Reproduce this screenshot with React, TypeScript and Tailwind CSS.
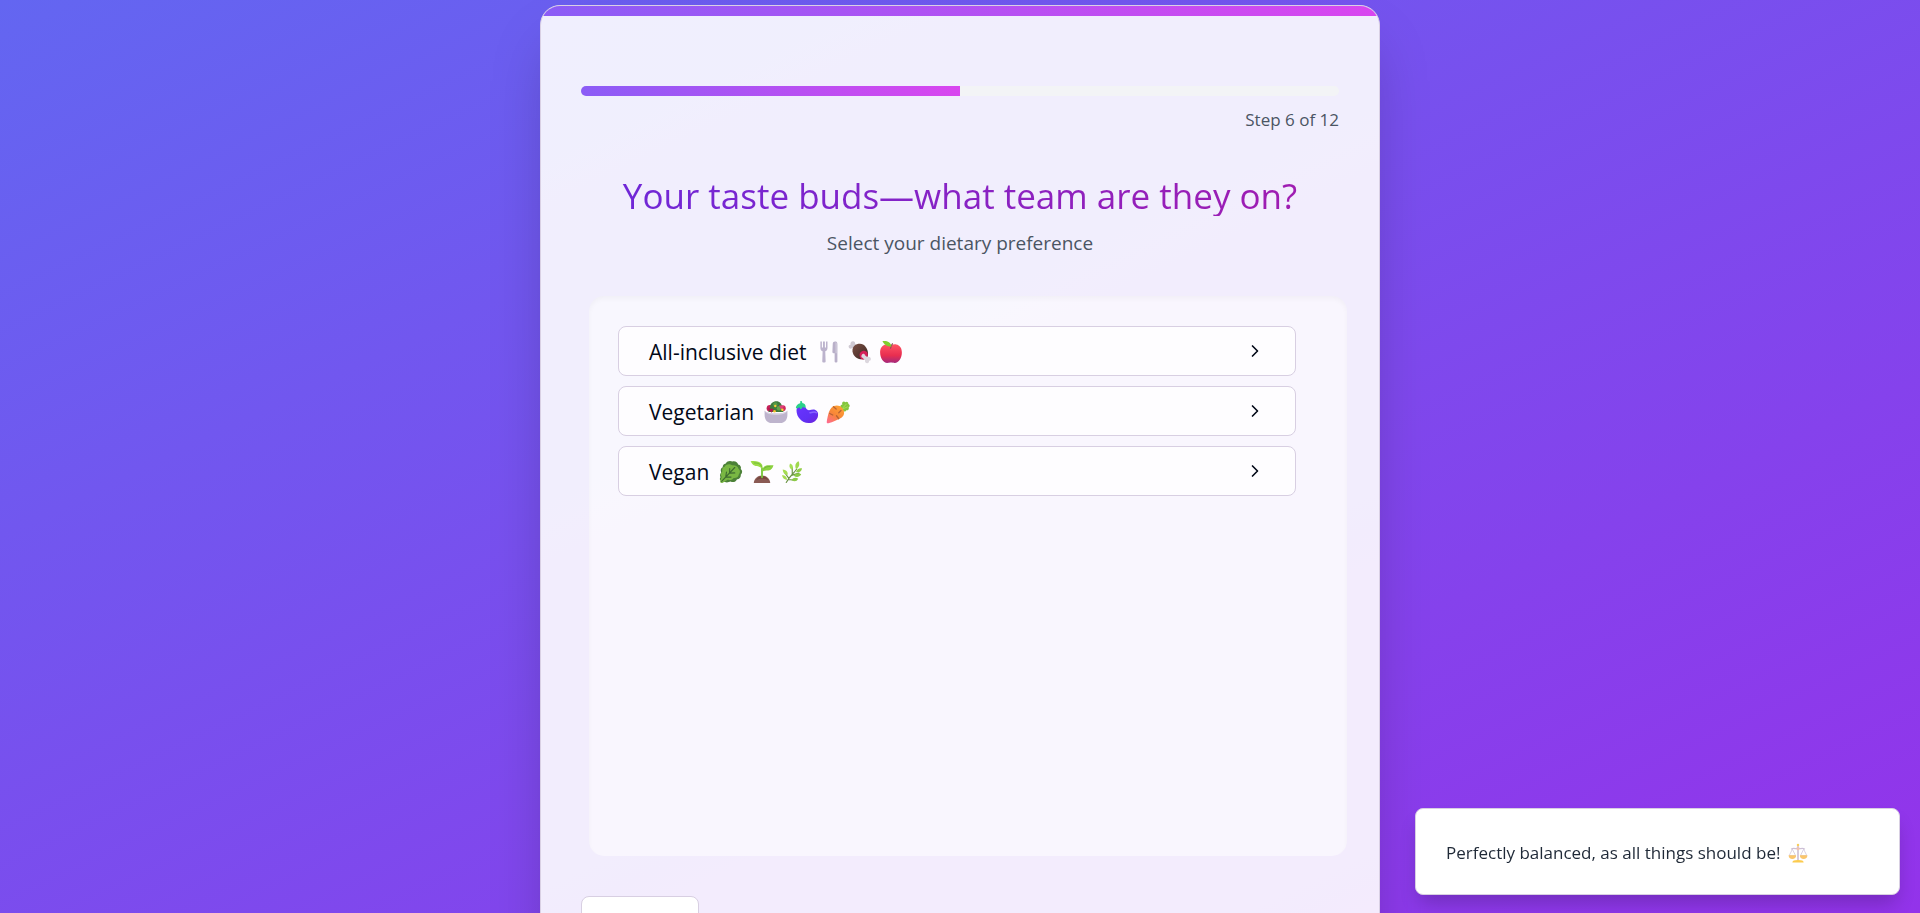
import { useId, type ReactNode } from "react";
import { ChevronRight } from "lucide-react";

function Emoji({ label, small, children }: { label: string; small?: boolean; children: ReactNode }) {
  return (
    <svg viewBox="0 0 32 32" role="img" aria-label={label} className={small ? "size-5 shrink-0" : "size-6 shrink-0"}>
      {children}
    </svg>
  );
}

function ForkAndKnife() {
  return (
    <Emoji label="Fork and knife">
      <path d="M4.500 2v8.500c0 2.500 1.500 4 3 4.500L7 28.500a1.500 1.500 0 0 0 1.500 1.500h1.500a1.500 1.500 0 0 0 1.500-1.500L11 15c1.500-.5 3-2 3-4.500V2h-2v8h-1.500V2H8v8H6.500V2Z" fill="#bcb3cd" />
      <path d="M21 5c0-2 1.500-3 3-3h1c1.500 0 2.200 1.500 2.200 3.500V28.500a1.500 1.500 0 0 1-1.500 1.500H25a1.500 1.500 0 0 1-1.500-1.500V17.500H22c-1 0-1.500-.6-1.500-1.600Z" fill="#b9b0c9" />
      <path d="M24.500 3h.6c1 0 1.500 1 1.500 2.500v12h-2Z" fill="#cdc6d8" />
    </Emoji>
  );
}

function MeatOnBone() {
  const id = useId();
  return (
    <Emoji label="Meat on bone">
      <defs>
        <linearGradient id={id} x1="0" y1="0" x2="1" y2="1">
          <stop offset="0" stopColor="#795044" />
          <stop offset="1" stopColor="#3f2522" />
        </linearGradient>
      </defs>
      <path d="m9.500 11-4-.2C3.500 12.500.8 11 .8 8.800c0-1.700 1.200-2.600 2.500-2.600C3 3.500 4.200 1.500 6.500 1.500c2.500 0 3.500 2.200 3 3.900l3 2.600Z" fill="#cfc9d2" />
      <path d="M6 15C5.500 8.500 10 5 16 5c6 .3 9.500 5.500 10.500 11 1 6-1.500 9.500-7.500 9.800C12 26 6.500 21 6 15Z" fill={`url(#${id})`} />
      <path d="M15.500 20.500c-.5-4 3.500-6.500 7.200-6 2.500.4 3.900 2.500 3.600 5.500-.4 4-3 6.300-6.500 6-2.500-.2-4-2.500-4.300-5.500Z" fill="#d61f58" />
      <path d="M18.500 19.500c1.500-2 3.800-1 4.500 1l2.500 2.200c3-1.200 5.300.6 5 2.800-.1 1.500-1.200 2.300-2.400 2.300.2 1.800-.7 3.200-2.500 3.200-2.400 0-3.300-2-2.900-4l-3.400-3.200c-1.700-.8-2-2.800-.8-4.300Z" fill="#dcd7de" />
    </Emoji>
  );
}

function Apple() {
  const id = useId();
  return (
    <Emoji label="Red apple">
      <defs>
        <linearGradient id={id} x1="0" y1="0" x2="0" y2="1">
          <stop offset="0" stopColor="#ff5364" />
          <stop offset="0.6" stopColor="#e82e50" />
          <stop offset="1" stopColor="#a5297c" />
        </linearGradient>
      </defs>
      <path d="M16 7.500c2-1.500 4.500-2 7-1.500 4.800.8 7.700 5 7.500 11-.2 7-4 13.500-9.500 13.500-2 0-3-.4-5-.4s-3 .4-5 .4c-5.500 0-9.300-6.500-9.500-13.500C1.300 11 4.200 6.800 9 6c2.500-.5 5 0 7 1.500Z" fill={`url(#${id})`} />
      <path d="M15.500 11c.3-2.500 1-4.500 2.500-6" stroke="#87505a" strokeWidth="1.500" strokeLinecap="round" fill="none" />
      <path d="M4.500 1.500C10.500.6 15.500 2.800 16.700 8.500 10.500 8.800 7.500 6.500 4.500 1.500Z" fill="#7fd02e" />
    </Emoji>
  );
}

function Salad() {
  return (
    <Emoji label="Green salad">
      <circle cx="8" cy="11" r="4.500" fill="#c41f58" />
      <circle cx="25" cy="11" r="4" fill="#d12a60" />
      <path d="M8 10c0-5 4-8.300 8.500-8.300C21 1.700 24 5 24 10l2 6H6Z" fill="#3f7b3d" />
      <circle cx="15" cy="6" r="3" fill="#559b48" />
      <circle cx="20" cy="11" r="3" fill="#64a349" />
      <path d="m20 7 7 1-4 5Z" fill="#e1407a" />
      <path d="m5 11 8 1-3 5Z" fill="#b5134d" />
      <circle cx="15" cy="8" r="1.600" fill="#f7c934" />
      <circle cx="14" cy="15" r="1.800" fill="#f7bd2e" />
      <circle cx="24.500" cy="13" r="1.600" fill="#ffd33c" />
      <path d="M.8 14c2 5.500 28.400 5.500 30.400 0V20c0 6.500-4 10.800-9.500 10.800H10.300C4.800 30.800.8 26.500.8 20Z" fill="#beb4cd" />
      <path d="M.8 14c2 5.500 28.400 5.500 30.400 0 0 7.500-30.400 7.500-30.400 0Z" fill="#d9d3e2" />
    </Emoji>
  );
}

function Eggplant() {
  const id = useId();
  return (
    <Emoji label="Eggplant">
      <defs>
        <linearGradient id={id} x1="0" y1="0" x2="1" y2="1">
          <stop offset="0" stopColor="#6a34ff" />
          <stop offset="0.6" stopColor="#6030f5" />
          <stop offset="1" stopColor="#7022d9" />
        </linearGradient>
      </defs>
      <path d="M4 9c2-3 7-3 9.500 0 1.500 2 2 4.500 5 4.500 3-.3 5.500-1.500 8-.6 3.500 1.200 4.700 4.500 4.200 8C29.800 27 25 30.800 18 30.800 9 30.500 2 22.500 2 14c0-2 .8-3.700 2-5Z" fill={`url(#${id})`} />
      <path d="M20 17c3-.5 6-2 8.500 0" stroke="#8964ff" strokeWidth="2" strokeLinecap="round" fill="none" />
      <path d="M7 1.500c1-.7 2.500 0 2.500 1.200L9.700 4c3 .5 4.700 2.500 4.500 5.200-.1 1.300-1.700 1.700-2.500.7L10.500 9l-1.700 2.500c-.6.9-1.700.8-2.100-.1L6 9.500l-3 1.700c-1 .5-2-.2-1.800-1.400C1.700 7 4 4.700 7 4.200Z" fill="#2bd18a" />
    </Emoji>
  );
}

function Carrot() {
  const id = useId();
  return (
    <Emoji label="Carrot">
      <defs>
        <linearGradient id={id} x1="0.8" y1="0" x2="0.1" y2="1">
          <stop offset="0" stopColor="#ffa334" />
          <stop offset="0.5" stopColor="#f88638" />
          <stop offset="1" stopColor="#ff6b91" />
        </linearGradient>
      </defs>
      <path d="M20 11c-2-3 .2-5 1.800-4.600C20.500 3 23.500.8 25.800 3c1.800-1.700 4.300-.2 4 2.200C32 6 32.200 9 30.200 10c1 2.500-1.200 4.500-3.200 3.500-.5 2-3.300 2.300-4.500.5Z" fill="#84c63e" />
      <path d="m21 12 6.500-7M22 12l7-3" stroke="#a6df52" strokeWidth="1.300" />
      <path d="M7 10.500c4.500-4.500 11-4 14.500 0 4 4.500 3.500 10-1 13C16 26.500 9 29 3.200 31 1.800 31.500.8 30.500 1 29c1-6 2.500-15 6-18.500Z" fill={`url(#${id})`} />
      <path d="m10 9 3.500 3M5 18l4 2M14 21l3 4M20 14l-3 3" stroke="#b86334" strokeWidth="1.700" strokeLinecap="round" />
    </Emoji>
  );
}

function LeafyGreen() {
  return (
    <Emoji label="Leafy green">
      <path d="M9 4.500C11 1 15 .5 18 2c3.500-1 7 1 7.500 4 3 .5 4.500 3.500 3.500 6 2.500 2 2.500 5.500 0 7.500.5 3.500-2 6-5 6-1.500 3.500-5.500 5-8.500 3l-5 1.500L3 28c-2-1-2.500-3-1-5-1.500-3 0-5.500 1-6.500-1.500-3-.5-6 2-7C4.500 7 6.500 4.800 9 4.500Z" fill="#4c8138" />
      <path d="M7.500 9c2-3.500 7-4 10-2 4-.5 8 1.500 8.500 4.500 2.500 2 2.500 5.500.5 7.500-.5 4-4 5.500-7 5-2 3-5 3.500-7.500 2L4.500 30.500c-2 .7-3.800-1-2.700-3.200l1.700-4.800c-2-3.500-.5-6 1-7.500-1-3 .5-5.500 3-6Z" fill="#79b743" />
      <path d="M3.500 28.500 21 10M9 22.500l1-6.500M9 22.500l7 .3M14 17.500l.3-6M14 17.500l7-.3" stroke="#3e6b30" strokeWidth="1.500" strokeLinecap="round" fill="none" />
    </Emoji>
  );
}

function Seedling() {
  return (
    <Emoji label="Seedling">
      <path d="M5 30.500c.5-5.500 5-10 11-10s10.500 4.500 11 10Z" fill="#8a5a54" />
      <path d="M8 27c2-4 5-5.500 8-5.500 4 0 7 2 8.500 5.500-5-2.500-11-2.500-16.500 0Z" fill="#77483f" />
      <path d="M16 23V11" stroke="#79c73e" strokeWidth="2.500" strokeLinecap="round" />
      <path d="M16 12C13.500 7 8 9 4.500 6.500 2.500 5 1.500 3 .8 1.700c5-.5 12-.7 15.200 4.300 1 2 .8 4 0 6Z" fill="#9cdb45" />
      <path d="M16.500 14.500C17 9 20 7 25 7h6.300c-1 3.500-3 6.500-6.800 7-3.500.4-6-.3-8 2Z" fill="#8cd140" />
      <path d="M5 4c5-.2 8.500.5 10.500 5M18 12c2-2.300 5-3.500 9-3.500" stroke="#68af37" strokeWidth="1" fill="none" />
    </Emoji>
  );
}

function Herb() {
  return (
    <Emoji label="Herb">
      <path d="M7 30c4-8 9-11 14-18M10.500 24.500 5 17M15 19.500V10M14 20.500l10-3M9.500 26l9 1" stroke="#6b9444" strokeWidth="1.500" strokeLinecap="round" fill="none" />
      <path d="M20 12c-2-5-.5-8.500 3.500-10.500C25.500 6 24 10 20 12Z" fill="#9ed84d" />
      <path d="M14.500 13c-3.500-2-4-5-2.500-8.500 4 1.500 5 5 2.500 8.500Z" fill="#a6df54" />
      <path d="M20 16c1-4 4.500-5.700 8-5-.5 4-3.500 6.300-8 5Z" fill="#91cd45" />
      <path d="M9 19.500c-4.500 0-6.500-3-6.700-7 4.200.2 7.200 3 6.700 7ZM8 26.500c-4.500-.7-6.300-3-6.500-6.500 4.200.5 6.800 2.700 6.500 6.500Z" fill="#a5dc52" />
      <path d="M17 21c2.500-3.500 6.500-4 10-2-2.500 4-6.300 4.700-10 2ZM14 26.500c2.500-3.200 6-3.500 9-1.500-2 3.800-5.500 4.500-9 1.500Z" fill="#8cc948" />
    </Emoji>
  );
}

function Scales() {
  return (
    <Emoji label="Balance scale" small>
      <path d="M16 3v24" stroke="#c9bdd4" strokeWidth="2.500" />
      <path d="M5 10c4-3 8 .5 11-2 3 2.500 7-1 11 2" stroke="#cdc0d6" strokeWidth="2" fill="none" />
      <path d="m7 10-5 10h10ZM25 10l-5 10h10Z" stroke="#cdc2d8" strokeWidth="1.200" fill="none" />
      <circle cx="16" cy="3" r="2" fill="#f9cf5c" />
      <circle cx="16" cy="9" r="2.500" fill="#f0c3b2" />
      <path d="M1 19.500h12c0 4-2.500 6-6 6s-6-2-6-6ZM19 19.500h12c0 4-2.500 6-6 6s-6-2-6-6Z" fill="#fac66c" />
      <path d="M7 31c0-3 3-4 9-4s9 1 9 4Z" fill="#fccb4e" />
    </Emoji>
  );
}

const options = [
  { name: "All-inclusive diet", icons: [ForkAndKnife, MeatOnBone, Apple] },
  { name: "Vegetarian", icons: [Salad, Eggplant, Carrot] },
  { name: "Vegan", icons: [LeafyGreen, Seedling, Herb] },
];

const step = 6;
const totalSteps = 12;

export default function App() {
  return (
    <div className="h-screen overflow-y-auto bg-[linear-gradient(to_bottom_right,#6366f1,#9333ea)] pt-[5px] font-['Open_Sans','Noto_Sans',sans-serif] [scrollbar-width:none]">
      <main className="mx-auto max-w-[840px] overflow-hidden rounded-[20px] border border-[#d9d0e4] bg-white/90 shadow-[0_31px_62px_-15px_rgba(0,0,0,0.25)]">
        <div className="h-2.5 bg-[linear-gradient(to_right,#8b5cf6,#d946ef)]" />
        <div className="px-10 pt-[70px] pb-10">
          <div
            role="progressbar"
            aria-label="Progress"
            aria-valuemin={0}
            aria-valuemax={totalSteps}
            aria-valuenow={step}
            className="h-2.5 overflow-hidden rounded-full bg-[#f3f4f6]"
          >
            <div
              className="h-full bg-[linear-gradient(to_right,#8b5cf6,#d946ef)]"
              style={{ width: `${(step / totalSteps) * 100}%` }}
            />
          </div>
          <p className="mt-3 text-right text-[17px] leading-6 text-[#4b5563]">
            Step {step} of {totalSteps}
          </p>

          <header className="mt-11 text-center">
            <h1 className="bg-[linear-gradient(to_right,#6d28d9,#a21caf)] bg-clip-text text-[35px] leading-10 font-normal text-transparent">
              Your taste buds—what team are they on?
            </h1>
            <p className="mt-[13px] text-[19px] leading-7 text-[#4b5563]">Select your dietary preference</p>
          </header>

          <section className="mt-[39px] -mr-2 ml-2 min-h-[560px] rounded-[15px] bg-white/50 py-[30px] pr-[51px] pl-[29px] shadow-[inset_0_3px_5px_rgba(0,0,0,0.03)]">
            <div className="flex flex-col gap-2.5">
              {options.map(({ name, icons }) => (
                <button
                  key={name}
                  type="button"
                  className="flex h-[50px] w-full items-center rounded-lg border border-[#d8cfe2] bg-white/80 px-[30px] text-[#020817]"
                >
                  <span className="mr-2.5 pt-0.5 text-[21px] leading-7">{name}</span>
                  <span className="flex items-center gap-[7px] pt-0.5">
                    {icons.map((Icon, i) => (
                      <Icon key={i} />
                    ))}
                  </span>
                  <ChevronRight className="ml-auto size-5" aria-hidden="true" />
                </button>
              ))}
            </div>
          </section>

          <footer className="mt-10">
            <button
              type="button"
              className="h-[60px] w-[118px] rounded-lg border border-[#d8cfe2] bg-white text-[17px] leading-6 text-[#020817]"
            >
              Back
            </button>
          </footer>
        </div>
      </main>

      <div
        role="status"
        className="fixed right-5 bottom-[18px] flex h-[87px] w-[485px] items-center gap-2 rounded-lg border border-[#d8cfe2] bg-white px-[30px] pt-0.5 shadow-[0_12px_19px_-4px_rgba(0,0,0,0.2)]"
      >
        <span className="text-[17px] leading-6 text-[#1f2937]">Perfectly balanced, as all things should be!</span>
        <Scales />
      </div>
    </div>
  );
}
